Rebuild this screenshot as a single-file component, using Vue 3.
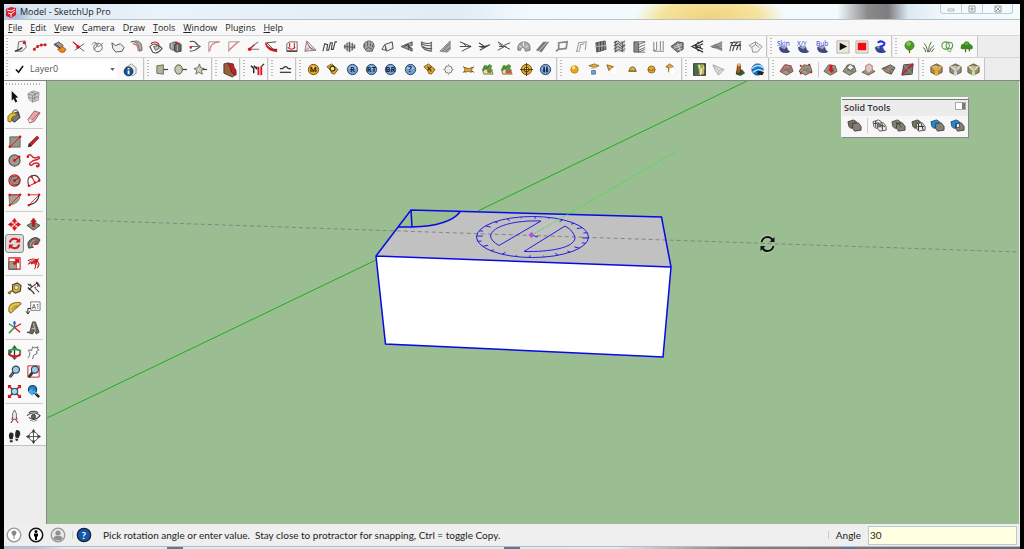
<script setup>
import { ref, h } from 'vue'

const layer = ref('Layer0')
const angle = ref('30')

const circle = (x, y, r) => `M${x - r} ${y}a${r} ${r} 0 1 0 ${2 * r} 0a${r} ${r} 0 1 0 ${-2 * r} 0z`
const fill = (d, color) => ({ d, fill: color })
const line = (d, stroke = '#333', w = 1) => ({ d, fill: 'none', stroke, w })
const both = (d, color, stroke = '#333', w = 0.8) => ({ d, fill: color, stroke, w })
const text = (value, x, y, size, color, weight = 700) => ({ value, x, y, size, fill: color, weight })

const red = '#d8141c'
const ball = (a, b, edge) => [
  both(circle(8, 8, 5.5), a, edge, 1),
  fill('M4 7a4.4 4.4 0 0 1 8 0q-4 1.5-8 0z', b),
]
const gold = ball('#e2a21c', '#f9d874', '#74500f')
const blue = ball('#6f9fcd', '#b4d3ee', '#2c4668')
const tag = both('M2 5l5-3 7 6-4 5-3-1-1-3z', '#dda32b', '#5a4516')
const dome = [
  fill('M2 9q1 6 7 6 4 0 5-2-3-1-3-4-4-3-9 0z', '#404a80'),
  fill('M4 9q3-3 7-1l-3 3z', '#9aa3c9'),
]
const sandbox = both('M1 10l5-7 7 1 2 6-7 4z', '#a09b8a', '#4a463b')
const sandGrid = line('M4 7l9 4M6 4l5 9M3 10l10-3M9 5l4 6', '#6c6758', 0.6)
const solidBack = (c) => both('M1 4l6-2 3 2v6l-6 1-2-2z', c, '#33312b')
const solidFront = (c) => both('M6 6l6-1 3 4v4l-7 1-2-3z', c, '#33312b')
const crate = (c) => [
  both('M2 5l6-3 6 3v6l-6 3-6-3z', '#a08b63', '#4c3b20'),
  both('M3 5l4-2 6 2-5 3z', '#c9b78d', '#5b4a2a', 0.6),
  fill('M7 8h2l1 6-2 1-2-1zM2 5l2-1 5 4-1 2zM14 5l-2-1-4 4 1 2z', c),
]
const lens = both(circle(9.5, 6, 3.8), '#9fcbe8', '#2d4860', 1.3)
const bushes = (pot) => [
  fill('M3 6l2-3 3 1 2-2 3 2-1 3 2 2-2 1H4L2 9z', '#5c9a4a'),
  line('M4 5l3 2 3-3M3 8l4 1', '#2f5a28', 0.8),
  both('M3 10h10l1 3H4z', pot, '#5a6a35', 0.7),
  fill(circle(6, 10, 2), '#e6ddb0'),
  fill('M8 9l4 1-1 2-3-1z', '#b6542f'),
]

const icons = {
  polyline: [both('M6 3l7-1 1 7-4 4H3l2-2z', '#f2f2f2', '#444'), line('M2 13q5-1 8-4', '#333', 1.5), fill(circle(12, 4, 1.6), red)],
  redArc: [line('M2 12q2-6 12-6', '#777'), fill(circle(2.5, 11, 1.6) + circle(6, 8, 1.6) + circle(10, 6.5, 1.6) + circle(14, 6, 1.6), red)],
  paintSplit: [both('M2 6l5-3 5 4-3 4z', '#999', '#444'), both('M6 11l5-3 4 3-2 3H9z', '#f08a20', '#9a4b08'), line('M3 5l6 5')],
  junction: [line('M2 3q4 4 12 10M14 5L4 12', '#555', 1), line('M2 3l6 5', red, 1.2), fill(circle(7.5, 8.5, 1.9), red)],
  bezier: [line(circle(8.5, 9, 4.5), '#666', 1), line('M2 6q4-5 5 0t7-2M4 12l5-7', '#777')],
  cloud: [both('M2 4l4 3 5-2 4 4-2 4-7 1-3-4z', '#eee', '#555', 1)],
  sweep: [both('M2 3q8-2 9 10l3-1Q14 2 8 2z', '#aaa', '#555'), line('M4 5q6 0 6 8', '#de7777', 1.5)],
  eyeCurve: [line('M2 8q6-6 13 2-5 7-10 4z', '#444', 1.1), line('M3 5q5-4 9 1', red, 1.2), both('M6 8l5-1 1 3-4 2z', '#ccc')],
  cubes: [both('M2 5l5-2 3 1v7l-5 1-3-2z', '#999', '#444'), both('M7 6l5-2 2 2v7l-5 1-2-1z', '#666', '#333'), line('M4 4v7M10 6v7', '#ddd', 0.7), fill(circle(9, 4, 1.3), red)],
  arrowLoop: [line('M3 3q5-2 9 4l2 1q-5 5-11 5', '#444', 1.1), line('M3 8h9M9 5l5 3-5 3', '#666'), fill(circle(4, 9, 1.3), red)],
  fillet: [line('M3 14V3h12', '#999'), line('M4 13Q4 4 14 3', '#e77070', 1.4)],
  chamfer: [line('M3 14V3h12', '#999'), line('M3 12L13 3', '#e77070', 1.4)],
  angleDot: [line('M14 3L4 11h11', '#777', 1.1), line('M5 11l5-5', red, 1.1), fill(circle(5, 11, 1.9), red)],
  flare: [fill('M2 3q2 8 12 8v3Q3 13 1 5z', red), line('M13 3L3 4l7 7h4', '#444')],
  boxLoop: [line('M3 13V5l3-2h8v10z', '#666', 1), line('M6 4v5M11 4v5M4 9q4 4 8 0', red, 1.1), line('M3 13h11', '#444', 1.6)],
  fold: [both('M4 2l10 10-12 1z', '#e5e5e5', '#666'), line('M4 3l3 6 6 3M7 9l-5 4', '#d55', 1), line('M7 8l3 4', '#66b', 1)],
  zigzag: [line('M1 13l2-8 3 1-1 6 2 0 2-8 2 0-1 7 2 0 2-8 2 0', '#444', 1.2)],
  pillars: [fill('M2 7l5-4 7 3v4l-6 4-6-4z', '#bbb'), line('M3 6v4M5.500 4v9M8 3v11M11 4v8M13.500 6v4M2 8l12 1', '#555', 1)],
  mitt: [both('M3 9q-1-6 5-7 6 0 6 6l-2 5H6z', '#aaa', '#444'), line('M4 9V5M7 8V3M10 8V4M12.500 9V6M5 11l3-2 4 2', '#444', 0.8)],
  panel: [both('M5 6l8-3 1 7-7 3z', '#eee', '#444', 1), line('M5 6l-3 5 4 1V8', '#444')],
  wedgeLeft: [both('M1 8l12-5v4l-4 1 4 2v3z', '#999', '#444'), line('M4 8l5-2v5M7 5l5 6', '#444')],
  waves: [line('M2 3q5 3 12 1M2 5q6 3 12 2M4 8q4 3 10 2M6 11q4 2 8 2M3 3v5l4 4M13 3v10', '#555', 1.1)],
  ramp: [both('M2 13L13 2v9l-3 3z', '#aaa', '#777'), line('M5 13l7-8M8 13l5-4', '#666')],
  forkA: [line('M2 3l12 5-10 5M2 8h12M5 4l4 4', '#444', 1)],
  forkB: [line('M2 4l6 4 6-2M3 12l11-6M2 8h7M4 9l6-1', '#444', 1.1)],
  forkC: [line('M2 3l6 4 7-3M2 12l7-4 6 3M3 8h8M3 5l4 3', '#444', 1)],
  arch: [both('M2 12q-1-8 6-9 8 0 7 9l-5 1q0-4-3-4-2 0-2 3z', '#aaa', '#666'), line('M3 7l3 2M8 3v5M13 7l-3 2', '#eee')],
  slats: [fill('M1 12L9 3h6L7 14z', '#777'), line('M4 13l9-10', '#ddd', 0.9)],
  frame: [line('M5 4l9-1-1 7-8 1zM2 13l3-2', '#888', 1.8)],
  archFrame: [line('M3 13l2-9 8-1-1 9M6 12l1-6 4-1M2 13h4', '#999', 1.1)],
  fence: [both('M3 4l10-2 1 9-10 3z', '#888', '#444'), line('M5 4v9M8 3v10M11 3v9', '#444', 1.1), line('M2 8l12-1', '#bbb')],
  hatch: [fill('M2 2h12v12H2z', '#ccc'), line('M2 4l4-2 3 3 5-3M2 7l5-2 3 3 4-2M2 11l4-3 4 2 4-3M3 14l4-3 4 2 3-3M4 2v12M11 3v11', '#444', 0.9)],
  stairs: [fill('M2 3h5v11H2z', '#888'), line('M14 3H2v11h12M7 4v10M7 6l7-3M7 9l7-3M7 12l7-3M7 14l7-3', '#555', 0.9)],
  bars: [line('M3 3v9M13 2v10M6 3v9M10 2v10M3 13h11M2 12h3', '#888', 1.1)],
  cubeHatch: [both('M1 8l7-5 6 1v7l-6 3z', '#777', '#333'), line('M4 8l9-3M4 10l9-3M7 12l6-2M8 4l3 9', '#ddd', 0.9)],
  leftHatch: [line('M14 2L2 8l12 6M14 5L7 8l7 3M9 3l-3 5 3 5M11 6v4', '#333', 1.2)],
  fanLeft: [fill('M1 8L14 2v11z', '#aaa'), line('M2 8l12-4M3 9l11-2M4 9l10 1M6 6l8 6', '#666', 0.8)],
  fan: [line('M2 13q1-9 5-10M5 13q1-7 5-9M9 12q1-5 4-7M2 4l12-1M3 7l11 0M13 4v8', '#444', 1.1)],
  house: [both('M1 7l7-4 7 5-5 6H5l-1-5z', '#f1f1f1', '#777'), line('M4 9l4-3 4 3M8 6V3', '#888')],

  skin: [...dome, text('Skin', 0, 7, 7, '#2832dc', 400)],
  xy: [...dome, text('X/Y', 1, 7, 7, '#2832dc', 400)],
  bub: [...dome, text('Bub', 1, 7, 7, '#2832dc', 400)],
  play: [both('M2 2h13v13H2z', '#ece8d8', '#aaa593'), fill('M5 4l8 4-8 4z', '#111')],
  stop: [both('M2 2h13v13H2z', '#ece8d8', '#aaa593'), fill('M4 4h9v8H4z', '#f40818')],
  bubbleHelp: [...dome, line('M5 4q3-3 7 0 1 3-4 4v3M8 12v2', '#2030e0', 2.2)],
  tree: [both(circle(8, 7, 4.8), '#4f9a20', '#2f6d12'), fill(circle(7, 5, 2.5), '#85c34c'), line('M8 11v4', '#7a4b1c', 1.3)],
  grass: [line('M7 14Q6 6 3 5M8 14q0-7 3-11M9 14q1-5 5-7M5 14Q5 10 2 9M11 14l3-4', '#4b6838', 1)],
  rings: [line(circle(6, 7, 4) + circle(10, 7, 3.5), '#5d9a44', 1.2), line('M5 10l6 4 2-6', '#7fb263')],
  bush: [fill('M2 8q0-3 3-3 1-4 5-2 1 2 3 3 3 2 1 5H3q-2-1-1-3z', '#3d8a25'), fill(circle(8, 5, 1.6), '#65b13d'), line('M7 11v3M11 10v3', '#70471c', 1.3)],

  layerInfo: [both('M4 6l6-4 5 4v6l-4 3z', '#eee', '#777'), both(circle(7, 10, 4.8), '#164f8e', '#082a54'), fill('M6 9h2v4H6zM6 6.500h2V8H6z', '#fff')],
  pushTrap: [both('M3 4l7-1v10l-7-1z', '#b4b39c', '#55543f'), line('M10 8h5', '#444', 1.3)],
  pushOval: [both('M2 8a4 5 0 1 0 8 0a4 5 0 1 0-8 0z', '#c5c5b2', '#55543f', 1), line('M10 8h5', '#444', 1.3)],
  pushStar: [both('M7 2l1 4 4 1-3 2 1 4-4-2-3 2 1-4-3-2 4-1z', '#cfcdba', '#55543f'), line('M10 8h5', '#444', 1.3)],
  boot: [both('M2 2l4-1 3 5 5 3v5l-3 2-9-4z', '#95643a', '#3b2617'), both('M6 1l6 1 1 4 2 3v5l-5-3-1-5z', '#c3222c', '#5c1016')],
  clamp: [line('M1 4l3 3v5M4 4l3 3V5', '#222', 1.5), fill('M8 5h5v9H8z', red), line('M10.500 5v9', '#fff'), line('M12 5l3-3', '#222', 1.2)],
  weld: [line('M2 7h3q3-4 6 0h3', '#333', 1.3), line('M2 11h12', '#333', 1.3)],
  ballM: [...gold, text('M', 4, 11, 8, '#30230b')],
  tagO: [tag, both(circle(8, 7, 2.6), '#ffe58a', '#322409', 1.2)],
  ballR: [...blue, text('R', 5.2, 11, 8, '#152640')],
  ballRT: [...blue, text('RT', 3, 11, 8, '#152640')],
  ballBR: [...blue, text('BR', 2.6, 11, 8, '#152640')],
  ballQ: [...blue, text('?', 5.3, 11, 9, '#152640')],
  tagX: [tag, line('M6 5l4 5M10 5L6 9', '#4b330c', 1.2)],
  diamond: [both('M8 4l3 1 1 3-1 3-3 1-3-1-1-3 1-3z', '#eee', '#555'), line('M8 2v2M8 12v2M2 8h2M12 8h2', '#aaa')],
  crossGold: [line('M2 5l12 6M2 11l12-6', '#5b461c', 1), both('M4 6l4 1 4-1-1 5-3-1-4 1z', '#e0a52c', '#78581b')],
  plantA: bushes('#b9d27e'),
  plantB: [...bushes('#d5b070'), fill('M7 9h6v3H7z', '#d84d40')],
  target: [...gold, line(circle(8, 8, 2.6) + 'M8 1v14M1 8h14', '#4d3710', 1)],
  pause: [...blue, line('M6.500 5v6M9.500 5v6', '#16243b', 1.8)],
  sphere: [both(circle(8, 8, 4), '#eaa51e', '#b67c16'), fill(circle(7, 6, 1.8), '#ffe687')],
  cone: [both('M3 4l6-2 5 2-5 2z', '#e4a93c', '#81601d'), line('M5 7l6-1', '#bbb'), both('M6 9h4v4H6z', '#75a6d1', '#3c6690')],
  pennant: [both('M2 3l7 2-5 4z', '#e4a93c', '#735216'), both(circle(10, 10, 4), '#fff', '#eee')],
  half: [both('M4 10q1-5 4-5t4 5z', '#e0b24b', '#5e4a20'), fill('M4 9h8v1H4z', '#876922')],
  band: [both(circle(8, 8, 3.8), '#e7a529', '#77541a'), line('M4 8q4 2 8 0', '#8a6116')],
  pennantB: [both('M3 5l4-3 4 3-4 2z', '#dfa93a', '#735216'), both(circle(10, 10, 4), '#fff', '#eee'), line('M6 6v5', '#ad7716', 1.2)],
  map: [both('M2 2h12v12H2z', '#c7b65c', '#222', 1.5), fill('M3 3h3l2 10H3z', '#416c49'), line('M7 3l3 5-1 6M10 3l3 4', '#eef2e4', 1.4), fill('M8 3h4v4H9z', '#93b54b')],
  terrain: [both('M2 3l12 5-6 6-3-4z', '#ddd', '#999'), line('M3 4l5 5 5-1M8 9v4', '#bbb')],
  photo: [fill('M6 9l6-1 3 4-5 3-5-2z', '#306137'), both('M7 3h3v9H6z', '#b65c22', '#462310'), fill(circle(8.5, 3, 1.8), '#e9b74b')],
  earth: [both(circle(8, 8, 6), '#1278cb', '#07396a'), line('M2 7q6-6 12-1M3 11q6-5 11-1', '#b8e1fa', 1.6), fill('M8 9l7 2-2 3-5-1z', '#222')],
  contours: [sandbox, sandGrid, line('M3 11q2-9 5-8 4 0 5 7M5 10q3-7 6 1', '#d8404a', 1)],
  scratch: [sandbox, sandGrid, fill(circle(3, 4, 1.2) + circle(12, 3, 1.2) + circle(3, 12, 1.2) + circle(14, 11, 1.2), red)],
  smoove: [sandbox, sandGrid, fill('M7 3h3v5h2l-3 4-3-4h1z', red)],
  stamp: [sandbox, sandGrid, both('M5 6l4-4 4 4-4 3z', '#eee')],
  drape: [both('M1 11l7-4 7 3-7 4z', '#a09b8a', '#4a463b'), both('M5 4l4-2 3 2v5l-4 3-3-3z', '#ddc5bd', '#a25d5d')],
  addDetail: [both('M1 7l9-4 5 3-4 7-6-2z', '#8e8b7c', '#3e3b31'), line('M3 7l10 1M7 5l4 8', '#555', 0.7), fill(circle(8, 8, 1.5), '#d77c73')],
  flip: [both('M4 3l10-1-1 11-11 1z', '#77736a', '#33312b'), line('M2 13L14 2', red, 1.5), line('M4 3l9 10', '#aaa', 0.7)],
  crateA: crate('#f1b12c'),
  crateB: crate('#c3d8ee'),
  crateC: crate('#cbdeb5'),

  select: [fill('M5 2l7 7-3 .4 2 4-2 1-2-4-2 2z', '#111')],
  component: [both('M2 5l6-3 6 2-1 8-6 2-4-3z', '#ccc', '#888'), line('M2 5l5 2 6-3M7 7v7M5 3l5 2-1 7M3 9l5 1 5-2', '#888')],
  paint: [both('M5 6l6-3 3 6-6 5-3-2z', '#777', '#333', 1), line('M6 6q-1-5 4-5 3 1 3 6', '#333', 1), both('M1 8q2-4 7-4l3 3q-5 0-6 3l-1 4-3-1z', '#e0bf2c', '#6b5a10')],
  eraser: [both('M2 11l7-9 6 2-6 9-5 2z', '#eca3a8', '#795056'), fill('M3 11l3 1-1 2-2-1z', '#fff1ef'), line('M6 12l2-2 6-6', '#a66770')],
  rect: [both('M3 3h11v11H3z', '#96968a', '#555547'), line('M3 14L14 3', red), fill(circle(3, 13.5, 1.4) + circle(14, 3, 1.4), red)],
  pencil: [line('M4 12l9-9', '#711', 3.4), line('M5 11l8-8', '#d3282b', 1.8), fill('M2 14l1-4 3 3z', '#222')],
  circle: [both(circle(8, 8, 6), '#9b9c8f', '#535348', 1.1), line('M8 8l5-4', red, 1.2), fill(circle(8, 8, 1.5) + circle(13, 4, 1.4), red)],
  freehand: [line('M2 4q1-4 4-1 3 4 7 1 3 1-1 3-5 1-7 3-3 3 1 3 3-3 7-2 2 2 0 4', '#c8232a', 1.5), fill(circle(2, 4, 1.4) + circle(12, 14, 1.4), red)],
  polygon: [both(circle(8, 8, 6), '#ddd', red, 1.2), both('M5 4l5-1 4 4-2 5-5 1-4-4z', '#929386', '#333'), line('M8 8l5-3', red, 1.3), fill(circle(8, 8, 1.7), red)],
  arc: [line('M3 14Q0 5 6 3q6-2 9 5', '#444', 1.2), line('M3 14L15 8M6 4l4 7', red, 1.1), fill(circle(3, 13.500, 1.3) + circle(14, 8, 1.3) + circle(6, 4, 1.3) + circle(9.500, 10, 1.3), red)],
  pie: [both('M2 3h12Q14 12 3 14z', '#a4a394', '#656253'), line('M3 14L14 3H2', red, 0.9), fill(circle(3, 3, 1.3) + circle(14, 3, 1.3) + circle(3, 14, 1.3), red)],
  arcTwo: [line('M3 14Q13 12 14 3', '#333', 1.2), line('M3 3h11L3 14', red, 0.9), fill(circle(3, 3, 1.3) + circle(14, 3, 1.3) + circle(3, 14, 1.3), red)],
  move: [fill('M8 1l3 4H9v2H7V5H5zM8 15l3-4H9V9H7v2H5zM1 8l4-3v2h2v2H5v2zM15 8l-4-3v2H9v2h2v2z', red)],
  pushpull: [both('M1 9l7-4 7 4-7 5z', '#898875', '#38372c'), both('M7 10V5H5l3-4 3 4H9v5z', red, '#7c1018', 0.5)],
  rotate: [line('M3 7Q4 3 8 3q3 0 4 2M13 9q-1 4-5 4-3 0-4-2', red, 2.2), fill('M14 2v5H9zM2 14V9h5z', red)],
  followme: [both('M3 13Q0 6 6 3q5-3 9 1l-2 4Q9 5 7 8t1 4z', '#756b61', '#332b25'), line('M5 11q-1-5 5-7', '#bbb'), line('M8 9l5-1', red, 2)],
  scale: [line('M2 2h12v12H2z', red, 1.1), both('M2 6h8v8H2z', '#a0a08f', '#4d4d41'), fill('M8 3h5v5l-2-1-3 3-2-2 3-3z', red)],
  offset: [line('M2 5q9-5 12 4-1 3-2 4', red, 1.2), line('M2 9q5-4 8 0 1 3-1 5', red, 1.1), line('M3 7q7-5 9 3', '#444', 1), fill('M8 5l6-3-3 7-2-2-3 2-1-1z', red)],
  tape: [both('M6 4l5-2 4 3-1 6-5 2-3-2z', '#dab239', '#4c4020', 1.2), both(circle(10, 7, 2.3), '#ddd', '#666'), line('M6 10l-5 3M3 12v2', '#866618', 1.8)],
  dimension: [line('M3 9l9-7M2 3l2 2M4 8l5 6M12 6l2-3M9 14l-2-3M12 3l3 3M10 8l4 4', '#333', 1.1), line('M2 7l3 3M11 1l2 2M4 3l2 3', '#333', 1.4), fill(circle(10, 7, 1), red)],
  protractor: [both('M2 12Q1 5 8 3q7-1 7 1L4 14z', '#e9ca45', '#8b7427', 1.1), both('M5 10q1-4 6-4z', '#fff', '#8b7427')],
  label: [both('M5 2h10v9H5z', '#fff', '#555'), text('A1', 6, 9.5, 7, '#333', 400), line('M5 9H2v5M0 12l2 3 2-3', '#222', 1)],
  axes: [line('M8 8V1', '#2354d4', 1.6), line('M8 8L2 14M8 8L2 4', '#2d9e38', 1.6), line('M8 8l7-4M8 8l6 5', red, 1.4), fill('M6 4l2-3 2 3z', '#3566c8')],
  text3d: [both('M4 13l3-11h3l4 11-3 2-2-4-2 4-6-2z', '#6d6b60', '#302f29'), line('M8 3l2 9M6 9l4 0', '#c0baa9', 1.1)],
  orbit: [line('M8 2v12', '#333', 1.4), fill('M5 4l3-4 3 4zM5 13l3 3 3-3z', '#555'), line('M2 6q6-3 12 0v3', '#2c9e52', 2.2), line('M2 8q0 4 6 4t6-3', red, 2.2), fill('M1 5l5 2-4 4z', '#267448')],
  pan: [both('M2 14q3-3 2-6-2-2-1-3l3 1 1-4 2 1 4-1-1 2 2 1-3 2 1 2-4 2-1 4', '#fff', '#666', 1)],
  zoom: [line('M3 14l4-5', '#333', 3), line('M3 14l4-5', '#7798ad'), lens],
  zoomWindow: [line('M2 2h12v12H2z', red, 1), line('M3 14l4-5', '#333', 3), lens],
  extents: [line('M2 2l4 4M14 2l-4 4M2 14l4-4M14 14l-4-4', '#b1232a', 1.8), fill('M1 1h4L1 5zM15 1h-4l4 4zM1 15h4l-4-4zM15 15h-4l4-4z', red), both(circle(8, 8, 3.4), '#a9d5ea', '#315466', 1.2)],
  previous: [line('M10 10l4 4', '#222', 2.6), both(circle(7, 6, 4.4), '#247fc7', '#174365', 1.2), fill('M2 8l5-4v3q4 0 5 5-2-3-5-2v3z', '#49abec')],
  position: [both('M6 11V5l2-4 2 4v6z', '#eee', '#444'), line('M7 11l-3 4M9 11l3 4', red, 1.1), line('M6 9l-1 2M10 9l1 2', '#444')],
  look: [line('M1 7q7-6 14 0-6 7-12 2M3 4q5-3 10 0', '#444', 1.1), both(circle(8, 8, 2.3), '#666', '#222'), line('M4 12q4 2 8 0', '#999')],
  walk: [fill('M3 4q4-1 4 3l-1 4H3Q1 7 3 4zM3 12h3v2H3zM10 1q5 0 4 5l-2 4-3-1q-1-5 1-8zM9 10l3 1-1 2-2-1z', '#262626')],
  section: [both(circle(8, 8, 4.8), '#fff', '#444', 1), line('M8 1v14M1 8h14', '#444', 0.9), fill('M8 0l2 3H6zM8 16l2-3H6zM16 8l-3-2v4zM0 8l3-2v4z', '#333')],

  solidShell: [solidBack('#736f62'), solidFront('#858172')],
  intersect: [solidBack('#eee'), solidFront('#eee'), fill('M6 6h4v4H6z', '#777365'), line('M9 8l5 1M4 3v7M2 6l5-1M11 6v7', '#333')],
  union: [solidBack('#858172'), solidFront('#858172'), line('M5 5l5 2M9 8l2 2', '#333')],
  subtract: [solidBack('#737062'), solidFront('#eee'), line('M8 6v7M11 6l2 7M7 9l7 0', '#333', 1.1)],
  trim: [solidBack('#168ce5'), solidFront('#858172')],
  split: [solidBack('#168ce5'), solidFront('#858172'), both('M7 6h3v4H7z', '#fff', '#333')],
}

const Icon = ({ name }) =>
  h('svg', { viewBox: '0 0 16 16', width: 15, height: 15, overflow: 'visible', 'aria-hidden': 'true' },
    icons[name].map((p) => p.value
      ? h('text', { x: p.x, y: p.y, 'font-size': p.size, fill: p.fill, 'font-weight': p.weight }, p.value)
      : h('path', { d: p.d, fill: p.fill, stroke: p.stroke, 'stroke-width': p.w })))
Icon.props = ['name']

const menus = ['File', 'Edit', 'View', 'Camera', 'Draw', 'Tools', 'Window', 'Plugins', 'Help']
  .map((name) => ({ name, key: name === 'Draw' ? 1 : name === 'Plugins' ? -1 : 0 }))

const rowOne = [
  { width: 763, tools: ['polyline', 'redArc', 'paintSplit', 'junction', 'bezier', 'cloud', 'sweep', 'eyeCurve', 'cubes', 'arrowLoop', 'fillet', 'chamfer', 'angleDot', 'flare', 'boxLoop', 'fold', 'zigzag', 'pillars', 'mitt', 'panel', 'wedgeLeft', 'waves', 'ramp', 'forkA', 'forkB', 'forkC', 'arch', 'slats', 'frame', 'archFrame', 'fence', 'hatch', 'stairs', 'bars', 'cubeHatch', 'leftHatch', 'fanLeft', 'fan', 'house'] },
  { width: 124, tools: ['skin', 'xy', 'bub', 'play', 'stop', 'bubbleHelp'] },
  { width: 85, tools: ['tree', 'grass', 'rings', 'bush'] },
]
const rowTwo = [
  { width: 140, layers: true, tools: ['layerInfo'] },
  { width: 67, tools: ['pushTrap', 'pushOval', 'pushStar'] },
  { width: 27, tools: ['boot'] },
  { width: 27, tools: ['clamp'] },
  { width: 27, tools: ['weld'] },
  { width: 260, tools: ['ballM', 'tagO', 'ballR', 'ballRT', 'ballBR', 'ballQ', 'tagX', 'diamond', 'crossGold', 'plantA', 'plantB', 'target', 'pause'] },
  { width: 124, tools: ['sphere', 'cone', 'pennant', 'half', 'band', 'pennantB'] },
  { width: 86, tools: ['map', 'terrain', 'photo', 'earth'] },
  { width: 149, tools: ['contours', 'scratch', '|', 'smoove', 'stamp', 'drape', 'addDetail', 'flip'] },
  { width: 65, tools: ['crateA', 'crateB', 'crateC'] },
]
const palette = [
  ['select', 'component', 'paint', 'eraser'],
  ['rect', 'pencil', 'circle', 'freehand', 'polygon', 'arc', 'pie', 'arcTwo'],
  ['move', 'pushpull', 'rotate', 'followme', 'scale', 'offset'],
  ['tape', 'dimension', 'protractor', 'label', 'axes', 'text3d'],
  ['orbit', 'pan', 'zoom', 'zoomWindow', 'extents', 'previous'],
  ['position', 'look', 'walk', 'section'],
]
const solidTools = ['solidShell', '|', 'intersect', 'union', 'subtract', 'trim', 'split']

const ticks = Array.from({ length: 24 }, (_, i) => {
  const a = (i * Math.PI) / 12 + 0.05
  const at = (k) => `${532.5 + 56 * k * Math.cos(a)} ${237 + 20.5 * k * Math.sin(a)}`
  return `M${at(1)}L${at(i % 2 ? 0.93 : 0.89)}`
}).join('')
</script>

<template>
  <div class="screen">
    <div class="window">
      <header class="title">
        <svg class="logo" viewBox="0 0 12 12" width="12" height="12" aria-hidden="true">
          <path d="M1 3l5-2 5 1v7l-5 3-5-2z" fill="#dc1f2b" />
          <path d="M2 4l4 1 4-2M3 7l3 1v3M6 8l4-3" fill="none" stroke="#fff" stroke-width="1" />
        </svg>
        <h1>Model - SketchUp Pro</h1>
        <div class="caption">
          <button aria-label="Minimize"><svg viewBox="0 0 10 8" width="10" height="8"><path d="M2 4h6v2H2z" fill="#fff" stroke="#999" stroke-width=".7" /></svg></button>
          <button aria-label="Maximize"><svg viewBox="0 0 10 8" width="10" height="8"><path d="M2 1h6v6H2zM4 3h2v2H4z" fill="#fff" stroke="#999" /></svg></button>
          <button aria-label="Close"><svg viewBox="0 0 10 8" width="10" height="8"><path d="M2 1h6v6H2zM3 2l4 4M7 2L3 6" fill="#fff" stroke="#999" /></svg></button>
        </div>
      </header>

      <nav class="menu">
        <button v-for="m in menus" :key="m.name"><template v-if="m.key < 0">{{ m.name }}</template><template v-else>{{ m.name.slice(0, m.key) }}<u>{{ m.name[m.key] }}</u>{{ m.name.slice(m.key + 1) }}</template></button>
      </nav>

      <div v-for="(row, r) in [rowOne, rowTwo]" :key="r" class="bar">
        <div v-for="(g, i) in row" :key="i" class="group" :style="{ flexBasis: g.width + 'px' }">
          <i class="grip"></i>
          <div v-if="g.layers" class="layers">
            <svg viewBox="0 0 10 10" width="9" height="9" aria-hidden="true"><path d="M1 5l3 3 5-7" fill="none" stroke="#111" stroke-width="1.8" /></svg>
            <select v-model="layer" aria-label="Layer"><option>Layer0</option></select>
            <svg viewBox="0 0 6 4" width="5" height="3" aria-hidden="true"><path d="M0 0h6L3 4z" fill="#666" /></svg>
          </div>
          <template v-for="(t, k) in g.tools" :key="k">
            <i v-if="t === '|'" class="rule"></i>
            <button v-else class="tool" :aria-label="t"><Icon :name="t" /></button>
          </template>
        </div>
      </div>

      <main class="work">
        <aside class="side">
          <i class="side-grip"></i>
          <section v-for="(s, i) in palette" :key="i" :class="'rows-' + s.length / 2">
            <button v-for="t in s" :key="t" class="tool" :class="{ active: t === 'rotate' }" :aria-label="t"><Icon :name="t" /></button>
          </section>
        </aside>

        <div class="canvas">
          <svg class="scene" viewBox="47 81 972 443" preserveAspectRatio="xMinYMin slice" role="img" aria-label="Box with rotation protractor">
            <path d="M47 418L376 260M478 211L747 81" stroke="#1fae1f" />
            <path d="M411 210L661.500 217L671 267L376 256z" fill="#c1c1c1" />
            <path d="M411 210L460 212Q449 226 412 227H398z" fill="#9abd91" />
            <path d="M376 256L671 267L663 357L385.500 344z" fill="#fff" />
            <path d="M47 219L1019 252" stroke="#858585" stroke-dasharray="4 3" />
            <g fill="none" stroke="#0808e8" stroke-width="1.500">
              <path d="M411 210L661.500 217L671 267L663 357L385.500 344L376 256zM376 256L671 267" />
              <path d="M411 210L412 227M398 227H412Q449 226 460 212" />
            </g>
            <g fill="none" stroke="#2020e0">
              <ellipse cx="532.500" cy="237" rx="56" ry="20.500" />
              <path :d="ticks" />
              <path d="M541 221C515 220 492 226 490.500 236Q491 241 499 245.500zM565 226Q574 231 575 238C574 248 550 252 524 251.500z" />
            </g>
            <path d="M532 235L677 151" stroke="#48e048" stroke-dasharray="2 1" />
            <path d="M528.500 235l3-3 3 3-3 3z" fill="#b44fd8" />
            <path d="M534 236l4 1" stroke="#2020e0" />
            <g fill="none" stroke="#b9c9b5" stroke-width="4">
              <path d="M761.500 242q1.500-5 6-5 3.500 0 5 3M773.500 246q-1.500 5-6 5-3.500 0-5-3" />
            </g>
            <g fill="none" stroke="#111" stroke-width="2">
              <path d="M761.500 242q1.500-5 6-5 3.500 0 5 3M773.500 246q-1.500 5-6 5-3.500 0-5-3" />
            </g>
            <path d="M774.500 237v5h-5zM760.500 251v-5h5z" fill="#111" />
          </svg>

          <section class="solid" aria-label="Solid Tools">
            <div class="solid-head">
              <h2>Solid Tools</h2>
              <button aria-label="Close Solid Tools"></button>
            </div>
            <div class="solid-tools">
              <template v-for="t in solidTools" :key="t">
                <i v-if="t === '|'" class="rule"></i>
                <button v-else class="tool" :aria-label="t"><Icon :name="t" /></button>
              </template>
            </div>
          </section>
        </div>
      </main>

      <footer class="status">
        <button aria-label="Location"><svg viewBox="0 0 16 16" width="16" height="16"><circle cx="8" cy="8" r="6.800" fill="#fff" stroke="#999" stroke-width="1.300" /><path d="M5.500 6a2.500 2.500 0 0 1 5 0Q10 8 8.500 9v3h-1V9Q6 8 5.500 6z" fill="#888" /></svg></button>
        <button aria-label="Credits"><svg viewBox="0 0 16 16" width="16" height="16"><circle cx="8" cy="8" r="6.700" fill="#fff" stroke="#111" stroke-width="1.500" /><circle cx="8" cy="4.500" r="1.500" /><path d="M6 6.500h4v3H9V13H7V9.500H6z" /></svg></button>
        <button aria-label="Account"><svg viewBox="0 0 16 16" width="16" height="16"><circle cx="8" cy="8" r="6.800" fill="#e8e8e8" stroke="#999" stroke-width="1.300" /><circle cx="8" cy="6" r="2.600" fill="#909090" /><path d="M3.500 12q0-3 3-3h3q3 0 3 3-4 3-9 0z" fill="#909090" /></svg></button>
        <i class="rule"></i>
        <button aria-label="Help"><svg viewBox="0 0 16 16" width="16" height="16"><circle cx="8" cy="8" r="6.700" fill="#1656a6" stroke="#14243c" stroke-width="1.300" /><text x="5.500" y="11.500" font-size="10" font-weight="700" fill="#fff">?</text></svg></button>
        <p>Pick rotation angle or enter value.&nbsp; Stay close to protractor for snapping, Ctrl = toggle Copy.</p>
        <i class="rule"></i>
        <label for="angle">Angle</label>
        <input id="angle" v-model="angle" type="text">
      </footer>
      <div class="taskbar"><i></i><i></i><i></i></div>
    </div>
  </div>
</template>

<style>
body { margin: 0; background: #000; }
</style>

<style scoped>
* { box-sizing: border-box; }
.screen {
  min-height: 100vh;
  padding: 4px 4px 0;
  display: flex;
  background: #000;
  font: 9px/14px "Open Sans", "Noto Sans", sans-serif;
  color: #222;
}
.window { flex: 1; min-width: 0; display: flex; flex-direction: column; background: #ededed; }
button { border: 0; padding: 0; margin: 0; background: none; font: inherit; color: inherit; display: flex; align-items: center; justify-content: center; }
h1, h2, p { margin: 0; font: inherit; }
svg { display: block; flex: none; }

.title {
  height: 16px;
  display: flex;
  align-items: center;
  gap: 3px;
  padding-left: 1px;
  border-bottom: 1px solid #b9c0c6;
  background:
    radial-gradient(ellipse 20px 12px at 1% 80%, #9db5dc 0, transparent 100%),
    radial-gradient(ellipse 76px 30px at 69.500% 100%, #f1d27c 0, #f5e39b 65%, transparent 100%),
    linear-gradient(90deg, transparent 82%, #8a8a8a 85%, #7d7d80 87%, #dce8f2 89%, transparent 93%),
    linear-gradient(90deg, #d8e5f3 0, #eaf2fa 15%, #e2ecf5 45%, #f2fafe 52%, #f4fbff 100%);
}
.caption { margin-left: auto; margin-right: 7px; align-self: flex-start; display: flex; border: 1px solid #c3cbd2; border-top: 0; border-radius: 0 0 3px 3px; }
.caption button { width: 21px; height: 9px; border-right: 1px solid #c3cbd2; }
.caption button:last-child { width: 29px; border: 0; }

.menu { height: 15px; display: flex; align-items: center; gap: 8px; padding-left: 4px; background: #f8f8f8; }
.menu button { display: block; white-space: pre; }

.bar { height: 22px; display: flex; border-top: 1px solid #d6d6d6; background: #ededed; }
.bar + .bar { height: 23px; }
.group { flex: 0 1 auto; display: flex; align-items: center; background: #f9f9f9; border-right: 1px solid #c4c4c4; padding-right: 1px; margin-right: 1px; }
.grip { width: 2px; height: 18px; margin: 0 3px 0 2px; background: repeating-linear-gradient(#bbb 0 1px, transparent 1px 3px); }
.tool { flex: 1 1 0; min-width: 0; height: 19px; }
.layers { width: 106px; height: 18px; padding: 0 2px 0 4px; display: flex; align-items: center; gap: 6px; background: #fff; }
select { flex: 1; min-width: 0; appearance: none; border: 0; padding: 0; background: none; font: inherit; color: #555; }
.rule { width: 1px; height: 15px; margin: 0 2px; background: #ccc; }

.work { flex: 1; min-height: 0; display: flex; border-top: 1px solid #858585; }
.side { width: 43px; padding: 1px 3px 0 1px; border-right: 1px solid #858585; background: linear-gradient(#f9f9f9 364px, #c0c0c0 364px 365px, #ededed 365px); }
.side-grip { display: block; height: 2px; margin: 1px 1px 2px; background: repeating-linear-gradient(90deg, #bbb 0 1px, transparent 1px 3px); }
.side section { display: grid; grid-template-columns: 1fr 1fr; grid-auto-rows: 1fr; }
.side section + section { margin-top: 2px; padding-top: 3px; border-top: 1px solid #ccc; }
.rows-2 { height: 39px; }
.rows-3 { height: 62px; }
.rows-4 { height: 81px; }
.rows-2:last-child { height: 43px; }
.active { border: 1px solid #888; border-radius: 3px; background: #dcdcdc; }

.canvas { position: relative; flex: 1; min-width: 0; overflow: hidden; background: #9abd91; border-right: 1px solid #eee; }
.scene { position: absolute; width: 100%; height: 100%; }
.solid { position: absolute; top: 16px; right: 50px; width: 128px; height: 41px; background: #f7f7f7; border: 1px solid #f7f7f7; border-right-color: #888; border-bottom-color: #888; }
.solid-head { display: flex; justify-content: space-between; height: 17px; margin-top: 1px; padding-left: 2px; border-top: 1px solid #777; background: #ececec; }
h2 { line-height: 16px; font-weight: 600; color: #333; }
.solid-head button { width: 11px; height: 8px; margin: 2px; border: 1px solid #aaa; background: linear-gradient(90deg, #fff 6px, #777 6px); }
.solid-tools { display: flex; align-items: center; padding: 0 1px 0 3px; }

.status { height: 22px; display: flex; align-items: center; padding-left: 2px; background: #efefef; font-family: Lato, "Noto Sans", sans-serif; font-size: 10px; }
.status button { width: 16px; height: 16px; margin-right: 6px; }
.status .rule { height: 8px; margin: 0 3px 0 0; }
.status p { flex: 1; padding-left: 5px; white-space: nowrap; }
.status label { padding: 0 7px 0 4px; }
.status input { width: 149px; height: 19px; margin-right: 3px; padding: 0 1px; border: 1px solid #b7c9d2; background: #ffffe1; font: inherit; color: inherit; }
.taskbar { height: 3px; display: flex; justify-content: space-between; padding: 0 16%; border-top: 1px solid #b3bbc4; background: linear-gradient(90deg, #a9c5df 3%, #dfe9f2 6%, #e4ebf2 60%, #8a7f7a 72%, #686a70); }
.taskbar i { width: 16px; background: #607898; }
</style>
